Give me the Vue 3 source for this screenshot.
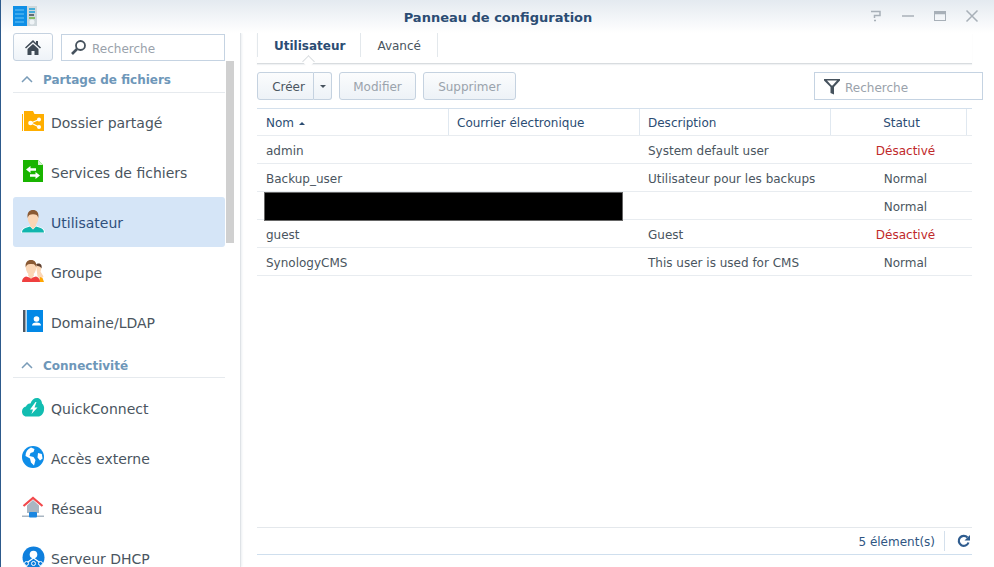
<script setup>
const sections = [
  { title: 'Partage de fichiers', items: [
    { name: 'Dossier partagé', icon: 'share' },
    { name: 'Services de fichiers', icon: 'files' },
    { name: 'Utilisateur', icon: 'user', active: true },
    { name: 'Groupe', icon: 'group' },
    { name: 'Domaine/LDAP', icon: 'ldap' }
  ]},
  { title: 'Connectivité', items: [
    { name: 'QuickConnect', icon: 'quick' },
    { name: 'Accès externe', icon: 'globe' },
    { name: 'Réseau', icon: 'net' },
    { name: 'Serveur DHCP', icon: 'dhcp' }
  ]}
]
const rows = [
  { nom: 'admin', desc: 'System default user', statut: 'Désactivé', off: true },
  { nom: 'Backup_user', desc: 'Utilisateur pour les backups', statut: 'Normal' },
  { nom: '', desc: '', statut: 'Normal', hidden: true },
  { nom: 'guest', desc: 'Guest', statut: 'Désactivé', off: true },
  { nom: 'SynologyCMS', desc: 'This user is used for CMS', statut: 'Normal' }
]
</script>

<template>
  <div class="win">
    <header class="titlebar">
      <svg class="logo" width="24" height="20" viewBox="0 0 24 20">
        <rect x="0" y="0" width="24" height="20" fill="#cfd8dc"/>
        <rect x="0" y="0" width="14" height="20" fill="#0f8fe6"/>
        <path d="M2 4h9M2 8h9M2 12h9M2 16h9" stroke="#6cc4f5" stroke-width="1"/>
        <path d="M16 3h6M16 6h6" stroke="#1aa0d8" stroke-width="1.500"/>
        <path d="M16 9h5" stroke="#3c4a55" stroke-width="1.500"/>
        <path d="M16 12h6" stroke="#6cb33f" stroke-width="1.500"/>
        <circle cx="19" cy="16" r="2.500" fill="#eef3f6"/>
      </svg>
      <span class="title">Panneau de configuration</span>
      <div class="winbtns">
        <svg width="14" height="14" viewBox="0 0 14 14" fill="none" stroke="#a8b0b8" stroke-width="1.500"><path d="M2 2.500h9v4H5.500v2.500"/><path d="M5 11.500h2"/></svg>
        <svg width="14" height="14" viewBox="0 0 14 14" fill="none" stroke="#a8b0b8" stroke-width="1.500"><path d="M1 7h12"/></svg>
        <svg width="14" height="14" viewBox="0 0 14 14" fill="none" stroke="#a8b0b8"><rect x="1.500" y="2.500" width="11" height="9" stroke-width="1"/><path d="M1.500 4h11" stroke-width="2.500"/></svg>
        <svg width="14" height="14" viewBox="0 0 14 14" fill="none" stroke="#a8b0b8" stroke-width="1.500"><path d="M1.500 1.500l11 11M12.500 1.500l-11 11"/></svg>
      </div>
    </header>

    <div class="body">
      <aside class="side">
        <div class="sidetop">
          <button class="home">
            <svg width="16" height="15" viewBox="0 0 16 15"><path d="M8 0L0 7.500l1 1L8 2.200l7 6.300 1-1-3-2.700V1h-2v2.100z" fill="#3f4a55"/><path d="M2.500 9L8 4l5.500 5v6H9.500v-4h-3v4h-4z" fill="#3f4a55"/></svg>
          </button>
          <div class="search">
            <svg width="17" height="17" viewBox="0 0 17 17" fill="none"><circle cx="10.500" cy="6.500" r="4.500" stroke="#46525d" stroke-width="1.800"/><path d="M7 10l-5 5" stroke="#46525d" stroke-width="2.600"/></svg>
            <span>Recherche</span>
          </div>
        </div>
        <div class="sidescroll">
          <div class="thumb"></div>
          <section v-for="s in sections" :key="s.title">
            <div class="sechead">
              <svg width="12" height="7" viewBox="0 0 12 7" fill="none" stroke="#7a9cb8" stroke-width="1.500"><path d="M1 6l5-5 5 5"/></svg>
              <span>{{ s.title }}</span>
            </div>
            <div class="items">
              <div v-for="it in s.items" :key="it.name" class="item" :class="{ active: it.active }">
                <svg class="ic" width="24" height="24" viewBox="0 0 24 24">
                  <template v-if="it.icon === 'share'">
                    <path d="M0 4h1v17H0z" fill="#ffb000"/>
                    <path d="M2 1h9l1.500 3H22v17H2z" fill="#ffae00"/>
                    <path d="M9 13l8-3.500M9 13l8 4" stroke="#fff" stroke-width="1.200"/>
                    <circle cx="8.500" cy="13" r="2.300" fill="#fff"/><circle cx="17" cy="9.500" r="2" fill="#fff"/><circle cx="17" cy="17" r="2" fill="#fff"/>
                  </template>
                  <template v-else-if="it.icon === 'files'">
                    <path d="M1 0h15l5 5v17H1z" fill="#19b400"/>
                    <path d="M16 0l5 5h-5z" fill="#d6f3cf"/>
                    <path d="M4 9.500l4.500-3.500v2.300H14v2.400H8.500V13zM18 15.500L13.500 12v2.300H8v2.400h5.500V19z" fill="#fff"/>
                  </template>
                  <template v-else-if="it.icon === 'user'">
                    <path d="M-1 23c0-3 1.500-4.500 4-5.500l5-2 3 2.500 3-2.500 5 2c2.500 1 4 2.500 4 5.500z" fill="#fff"/>
                    <path d="M0 22.500c0-2.500 1.500-4 4-4.800L8 16.500l3 3 3-3 4 1.200c2.500.8 4 2.300 4 4.800z" fill="#11b5ad"/>
                    <path d="M8 16l3 3.200 3-3.200-.5-3h-5z" fill="#fbd6b5"/>
                    <ellipse cx="11" cy="8" rx="5.300" ry="7.500" fill="#fbd6b5"/>
                    <path d="M5.700 8C4.700 2.500 7.500 0 11 0s6.300 2.500 5.300 8c-.7-2.800-2-3.800-5.300-3.800S6.400 5.200 5.700 8z" fill="#8a5a34"/>
                  </template>
                  <template v-else-if="it.icon === 'group'">
                    <path d="M14 5c1-1.500 4-1.500 5 .5.500 1.500.3 4-.5 6l1.500 2.500 1.500 2.500-3 3-3-3z" fill="#fbd6b5"/>
                    <path d="M14 5c1-2 4.500-2 5.500.5.300 1 .2 2 0 3-.7-1.500-2-2.500-4-2.500z" fill="#5e4030"/>
                    <path d="M18 17l2.500 1 1.500 4h-5z" fill="#ffa600"/>
                    <path d="M0 22c0-3 1.500-4.500 4-5.500l5 1.500 5-1.500c2.500 1 4 2.500 4 5.500z" fill="#ef3f3f"/>
                    <path d="M6 15.500l3 3.500 3-3.500-.5-2h-5z" fill="#fbd6b5"/>
                    <ellipse cx="9" cy="7.500" rx="5.200" ry="7.500" fill="#fbd6b5"/>
                    <path d="M3.800 7.500C2.800 2.500 5.500 0 9 0s6.200 2.500 5.200 7.500c-.7-2.800-2-3.500-5.200-3.500S4.500 4.700 3.800 7.500z" fill="#8a5a34"/>
                  </template>
                  <template v-else-if="it.icon === 'ldap'">
                    <rect x="1" y="0" width="2.500" height="22" fill="#4d5864"/>
                    <rect x="4.700" y="0" width="16.300" height="22" fill="#0288e6"/>
                    <circle cx="14.500" cy="9" r="2.800" fill="#fff"/>
                    <path d="M10 15.500c0-2 1.500-3 4.500-3s4.500 1 4.500 3z" fill="#fff"/>
                  </template>
                  <template v-else-if="it.icon === 'quick'">
                    <path d="M4.500 20.500C1.500 20.500 0 18 0 15.500 0 12.500 2 10.800 4 10.500 4.500 8.500 6.500 7 8.500 7.500 9.500 4 12 2 15 2c3 0 5 2.500 5 5.500 1.500 1 2.500 3.500 2 6.500-.5 4-3 6.500-6 6.500z" fill="#12bdb1"/>
                    <path d="M13.500 6L8 13.500h3L9.500 18l6-6.500h-3l2-5.500z" fill="#fff"/>
                  </template>
                  <template v-else-if="it.icon === 'globe'">
                    <circle cx="11" cy="11" r="11" fill="#0e8de8"/>
                    <path d="M9 1.500l3.500 1.500-1 3-3 1-1 3 4 1 2 3-1.500 5.500-3-3-1-4-4.500-2.500C3.500 6 5.500 3 9 1.500zM16 7l3.800 1 .8 4.500-2.600 2-2.500-3z" fill="#fff"/>
                  </template>
                  <template v-else-if="it.icon === 'net'">
                    <path d="M11 4l6 5.500V17H5V9.500z" fill="#a9b6c2"/>
                    <path d="M1.500 10L11 2l9.500 8" fill="none" stroke="#f2494c" stroke-width="2.200"/>
                    <rect x="0" y="19.500" width="22" height="1.500" fill="#a9b6c2"/>
                    <rect x="7" y="16" width="8" height="5.500" rx="1" fill="#1a86e0"/>
                  </template>
                  <template v-else>
                    <circle cx="11.500" cy="11.500" r="11" fill="#0e7fdd"/>
                    <circle cx="11.500" cy="8.500" r="3.800" fill="#fff"/>
                    <path d="M4.500 17L11.500 12l7 5" fill="none" stroke="#fff" stroke-width="1.200"/>
                    <circle cx="4.500" cy="17.500" r="2" fill="#0e7fdd" stroke="#fff"/><circle cx="11.500" cy="17.500" r="2" fill="#0e7fdd" stroke="#fff"/><circle cx="18.500" cy="17.500" r="2" fill="#0e7fdd" stroke="#fff"/>
                  </template>
                </svg>
                <span class="lbl">{{ it.name }}</span>
              </div>
            </div>
          </section>
        </div>
      </aside>

      <main class="main">
        <nav class="tabs">
          <span class="tab on">Utilisateur</span>
          <span class="tab">Avancé</span>
        </nav>
        <div class="toolbar">
          <div class="split">
            <button class="btn first">Créer</button>
            <button class="btn caret"><i></i></button>
          </div>
          <button class="btn dis w78">Modifier</button>
          <button class="btn dis w93">Supprimer</button>
          <div class="filter">
            <svg width="16" height="17" viewBox="0 0 16 17"><path d="M0 1h16v1.500L10 9v7.500L6.500 15V9L0 2.500z" fill="#46525d"/><path d="M3 2.500h10L8.500 7.500h-1z" fill="#fff"/></svg>
            <span>Recherche</span>
          </div>
        </div>
        <div class="grid">
          <div class="row head">
            <div class="c c1">Nom <i class="sort"></i></div>
            <div class="c c2">Courrier électronique</div>
            <div class="c c3">Description</div>
            <div class="c c4">Statut</div>
            <div class="c c5"></div>
          </div>
          <div v-for="(r, i) in rows" :key="i" class="row">
            <div class="c c1">{{ r.nom }}<div v-if="r.hidden" class="redact"></div></div>
            <div class="c c2"></div>
            <div class="c c3">{{ r.desc }}</div>
            <div class="c c4" :class="{ off: r.off }">{{ r.statut }}</div>
          </div>
        </div>
        <footer class="foot">
          <span>5 élément(s)</span>
          <em></em>
          <svg width="14" height="14" viewBox="0 0 14 14" fill="none"><path d="M11.500 8.500A5 5 0 1 1 10.500 3.500" stroke="#2f5c8f" stroke-width="2.200"/><path d="M13 1v5.500H7.500z" fill="#2f5c8f"/></svg>
        </footer>
      </main>
    </div>
  </div>
</template>

<style>
html, body { margin: 0; background: #fff; }
</style>

<style scoped>
.win {
  width: 994px; height: 567px; overflow: hidden; box-sizing: border-box;
  border-left: 1px solid #2d5a8c; background: #fff; display: flex; flex-direction: column;
  font-family: "DejaVu Sans", Verdana, sans-serif; color: #4a5560;
}
.titlebar {
  height: 33px; flex: none; display: flex; align-items: flex-start; position: relative;
  background: linear-gradient(#e4eaf0, #fff);
  padding: 6px 0 0 12px; box-sizing: border-box;
}
.logo { flex: none; }
.title {
  position: absolute; left: 1px; right: 0; top: 10px; text-align: center;
  font-size: 13px; font-weight: bold; color: #2b4c73; line-height: 16px;
}
.winbtns { margin-left: auto; display: flex; gap: 18px; padding: 3px 15px 0 0; }
.body { flex: 1; display: flex; min-height: 0; }
.side {
  width: 240px; flex: none; box-sizing: border-box; padding-left: 12px;
  border-right: 1px solid #dfe3e7; box-shadow: 1px 0 2px #eceff2;
}
.sidetop { display: flex; gap: 8px; width: 212px; }
.home {
  width: 40px; height: 28px; box-sizing: border-box; padding: 0; border: 1px solid #c5d2e0;
  border-radius: 3px; background: linear-gradient(#fff, #eef3f8);
  display: flex; align-items: center; justify-content: center;
}
.search {
  flex: 1; height: 27px; margin-top: 1px; box-sizing: border-box; border: 1px solid #c5d3e2;
  display: flex; align-items: center; gap: 5px; padding-left: 8px;
  font-size: 12px; color: #9aa2ab;
}
.search span { padding-top: 2px; }
.sidescroll { position: relative; width: 222px; }
.thumb { position: absolute; left: 213px; top: 0; width: 8px; height: 182px; background: #d0d0d0; }
.sechead {
  width: 212px; height: 32px; box-sizing: border-box; border-bottom: 1px solid #e6eaee;
  display: flex; align-items: center; gap: 10px; padding: 6px 0 0 8px;
  font-size: 12px; font-weight: bold; color: #6e97b9;
}
section + section .sechead { height: 31px; padding-top: 7px; }
.items { width: 212px; padding: 4px 0 0; }
section + section .items { padding-top: 5px; }
.item {
  height: 50px; box-sizing: border-box; display: flex; align-items: center; gap: 5px; padding-left: 9px;
  font-size: 14px; color: #4a5560; border-radius: 3px;
}
.lbl { padding-top: 2px; }
.item.active { background: #d5e5f7; color: #2f4f7c; }
.ic { flex: none; overflow: visible; }
.main { flex: 1; padding-left: 16px; padding-right: 22px; display: flex; flex-direction: column; min-width: 0; }
.tabs {
  height: 31px; flex: none; box-sizing: border-box; border-bottom: 1px solid #d8dcdf;
  display: flex; align-items: flex-start; box-shadow: 0 1px 1px #f0f2f4; position: relative;
}
.tab {
  height: 24px; line-height: 26px; font-size: 12px; padding: 0 16px; border-right: 1px solid #e3e8ec; color: #4a5560;
}
.tab:first-child { border-left: 1px solid #e3e8ec; padding-right: 15px; }
.tab.on { font-weight: bold; color: #2b4c73; position: relative; }
.tab.on::after {
  content: ""; position: absolute; left: 46px; top: 24px; width: 9px; height: 9px; background: #fff;
  border-left: 1px solid #d8dcdf; border-top: 1px solid #d8dcdf; transform: rotate(45deg); box-sizing: border-box;
}
.toolbar { display: flex; gap: 7px; margin-top: 8px; height: 28px; flex: none; align-items: flex-start; }
.split { display: flex; width: 75px; }
.btn {
  height: 28px; box-sizing: border-box; border: 1px solid #c5d2e0; border-radius: 3px;
  background: linear-gradient(#fbfcfd, #edf2f7); font: 12px "DejaVu Sans", Verdana, sans-serif; color: #4a5560; padding: 2px 0 0;
}
.first { width: 57px; border-radius: 3px 0 0 3px; padding-left: 6px; }
.caret { width: 18px; border-left: none; border-radius: 0 3px 3px 0; display: flex; align-items: center; justify-content: center; padding: 0; }
.caret i { border: 3px solid transparent; border-top: 3px solid #46525d; margin-top: 3px; }
.dis { color: #9aa3ac; }
.w78 { width: 77px; }
.w93 { width: 93px; margin-left: 0; }
.filter {
  margin-left: auto; width: 169px; height: 28px; box-sizing: border-box; border: 1px solid #c5d3e2;
  display: flex; align-items: center; gap: 5px; padding-left: 9px; font-size: 12px; color: #9aa2ab; margin-right: -11px;
}
.filter span { padding-top: 3px; }
.grid { margin-top: 8px; flex: 1; min-height: 0; }
.row { display: flex; height: 28px; box-sizing: border-box; border-bottom: 1px solid #e8ecf0; font-size: 12px; color: #4a5560; }
.row.head { border-top: 1px solid #d4e0ec; color: #2b4c73; height: 28px; }
.c { box-sizing: border-box; padding-left: 9px; padding-top: 2px; line-height: 27px; white-space: nowrap; position: relative; }
.head .c { border-right: 1px solid #e0e8f0; padding-top: 1px; }
.head .c5 { border-right: none; }
.c1 { width: 192px; }
.c2 { width: 191px; padding-left: 8px; }
.c3 { width: 191px; padding-left: 8px; }
.c4 { width: 136px; padding-left: 13px; text-align: center; }
.head .c4 { padding-left: 6px; }
.c5 { width: 5px; padding: 0; }
.off { color: #c0292a; }
.sort { display: inline-block; border: 3px solid transparent; border-bottom: 3px solid #2b4c73; margin-left: 1px; vertical-align: 2px; }
.redact { position: absolute; left: 7px; top: 0; width: 359px; height: 29px; box-sizing: border-box; background: #000; border: 1px solid #666; }
.foot {
  height: 28px; flex: none; margin-bottom: 12px; box-sizing: border-box;
  border-top: 1px solid #e4e8ec; border-bottom: 1px solid #cfdfee;
  display: flex; align-items: center; justify-content: flex-end; font-size: 12px; color: #2f5582;
}
.foot span { padding-top: 2px; }
.foot em { width: 1px; height: 20px; background: #d4e0ec; margin: 0 12px 0 9px; }
.foot svg { margin-right: 1px; }
</style>
